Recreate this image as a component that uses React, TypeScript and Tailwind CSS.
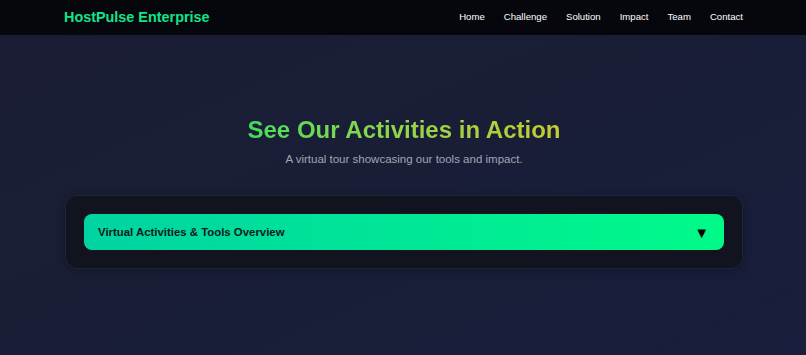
export default function App() {
  const links = ['Home', 'Challenge', 'Solution', 'Impact', 'Team', 'Contact'];

  return (
    <div className="min-h-[355px] bg-gradient-to-br from-[#1a1d33] to-[#181e3b] font-['Liberation_Sans',Arial,sans-serif]">
      {/* Navbar */}
      <nav className="flex h-[35px] items-center justify-between bg-[#06070c] pl-16 pr-[63px]">
        <span className="text-[14.4px] font-bold text-[#12e48a]">HostPulse Enterprise</span>
        <ul className="flex gap-[19px] text-[9.6px] text-white">
          {links.map((l) => (
            <li key={l}>{l}</li>
          ))}
        </ul>
      </nav>

      {/* Activities section */}
      <section className="pl-[65px] pr-[63px] pt-[80px]">
        <div className="text-center">
          <h2 className="inline-block bg-gradient-to-r from-[#42dc5c] to-[#c4cc30] bg-clip-text text-[24px] font-bold leading-[30px] text-transparent">
            See Our Activities in Action
          </h2>
        </div>
        <p className="mt-[6px] text-center text-[11.5px] text-[#a3a6b4]">
          A virtual tour showcasing our tools and impact.
        </p>

        <div className="mt-[27px] rounded-xl border border-[#1d2637] bg-[#11131f] p-[18px] shadow-[0_2px_10px_rgba(0,0,0,0.2)]">
          <button className="flex h-9 w-full items-center justify-between rounded-lg bg-gradient-to-r from-[#00d3a1] to-[#00fa88] px-[14px] text-left">
            <span className="text-[11.4px] font-bold text-[#0b1a1c]">Virtual Activities &amp; Tools Overview</span>
            <span className="mr-[1px] text-[15px] leading-none text-black">▼</span>
          </button>
        </div>
      </section>
    </div>
  );
}
